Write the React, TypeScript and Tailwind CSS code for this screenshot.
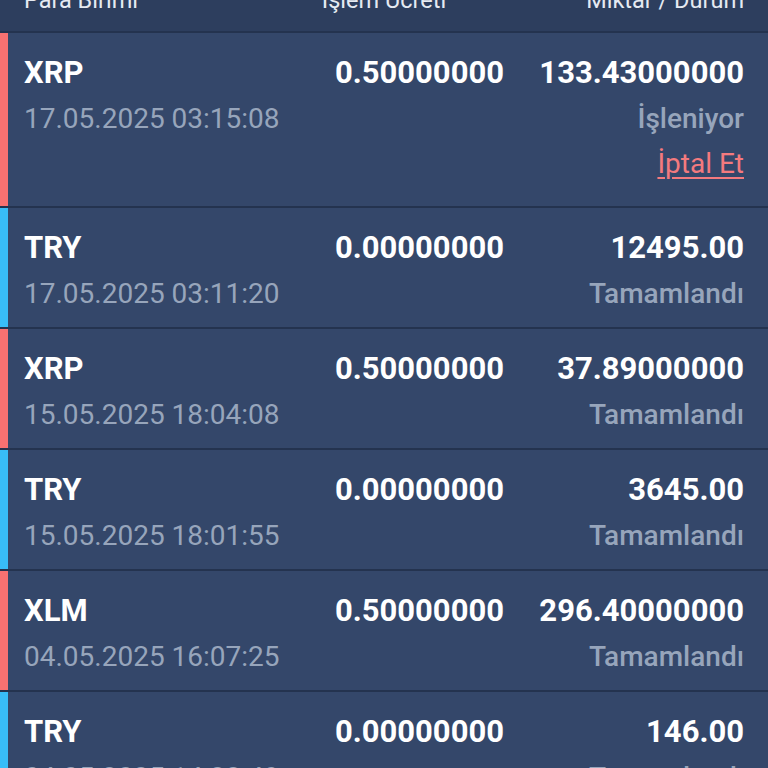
type Tx = {
  currency: string;
  date: string;
  fee: string;
  amount: string;
  status: string;
  side: 'out' | 'in';
  cancelable?: boolean;
};

const rows: Tx[] = [
  { currency: 'XRP', date: '17.05.2025 03:15:08', fee: '0.50000000', amount: '133.43000000', status: 'İşleniyor', side: 'out', cancelable: true },
  { currency: 'TRY', date: '17.05.2025 03:11:20', fee: '0.00000000', amount: '12495.00', status: 'Tamamlandı', side: 'in' },
  { currency: 'XRP', date: '15.05.2025 18:04:08', fee: '0.50000000', amount: '37.89000000', status: 'Tamamlandı', side: 'out' },
  { currency: 'TRY', date: '15.05.2025 18:01:55', fee: '0.00000000', amount: '3645.00', status: 'Tamamlandı', side: 'in' },
  { currency: 'XLM', date: '04.05.2025 16:07:25', fee: '0.50000000', amount: '296.40000000', status: 'Tamamlandı', side: 'out' },
  { currency: 'TRY', date: '04.05.2025 14:22:49', fee: '0.00000000', amount: '146.00', status: 'Tamamlandı', side: 'in' },
];

const Row = ({ tx }: { tx: Tx }) => (
  <div className="flex bg-[#34476a] border-b-2 border-[#24334f]">
    <div className={tx.side === 'out' ? 'w-2 shrink-0 bg-[#f87171]' : 'w-2 shrink-0 bg-[#38bdf8]'}></div>
    <div className="flex-1 grid grid-cols-3 pl-4 pr-6 pt-4 pb-[11px]">
      <div>
        <div className="text-[31px] leading-[47px] font-bold text-white">{tx.currency}</div>
        <div className="text-[28px] leading-[45px] text-[#97a5bb] whitespace-nowrap">{tx.date}</div>
      </div>
      <div className="text-right">
        <div className="text-[31px] leading-[47px] font-bold text-white">{tx.fee}</div>
      </div>
      <div className="text-right">
        <div className="text-[31px] leading-[47px] font-bold text-white">{tx.amount}</div>
        <div className="text-[28px] leading-[45px] font-medium text-[#97a5bb]">{tx.status}</div>
        {tx.cancelable && (
          <div className="pb-[8px]">
            <a href="#" className="text-[28px] leading-[46px] text-[#f47a7e] underline underline-offset-4 decoration-2">İptal Et</a>
          </div>
        )}
      </div>
    </div>
  </div>
);

export default function App() {
  return (
    <div className="h-[768px] overflow-hidden bg-[#34476a] font-['Roboto',sans-serif]">
      {/* header, page scrolled so its top is cut */}
      <div className="-mt-8 grid grid-cols-3 bg-[#2d3e5e] border-b-2 border-[#24334f] pl-6 pr-6 pt-4 pb-[15px] text-[23.5px] leading-8 text-[#e5eaf2]">
        <div>Para Birimi</div>
        <div className="text-center">İşlem Ücreti</div>
        <div className="text-right">Miktar / Durum</div>
      </div>
      {rows.map((tx, i) => (
        <Row key={i} tx={tx} />
      ))}
    </div>
  );
}
